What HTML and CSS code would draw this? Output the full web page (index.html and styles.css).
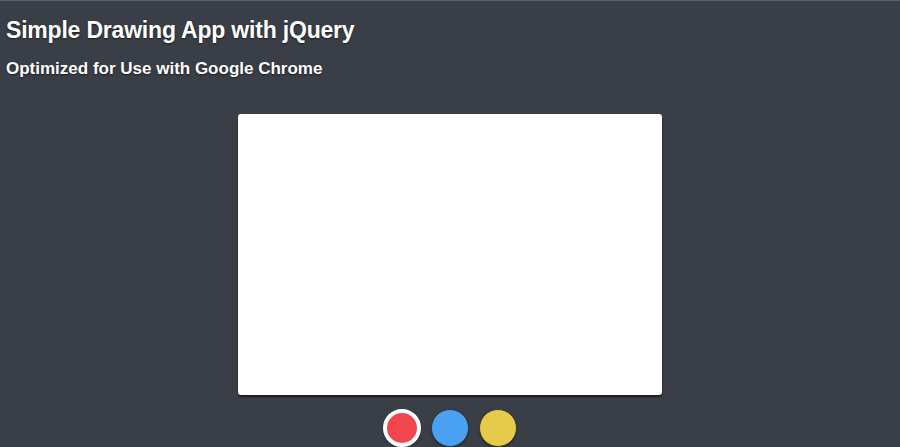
FILE: index.html
```html
<!DOCTYPE html>
<html>
<head>
<meta charset="utf-8">
<title>Simple Drawing App</title>
<link rel="stylesheet" href="styles.css">
</head>
<body>
<header class="header">
  <h1 class="title">Simple Drawing App with jQuery</h1>
  <h2 class="subtitle">Optimized for Use with Google Chrome</h2>
</header>
<main class="stage">
  <div class="canvas"></div>
  <ul class="colors">
    <li class="swatch red selected"></li>
    <li class="swatch blue"></li>
    <li class="swatch yellow"></li>
  </ul>
</main>
</body>
</html>
```

FILE: styles.css
```css
html, body {
  margin: 0;
  padding: 0;
  background: #3a3f47;
  height: 100%;
  overflow: hidden;
}
body {
  border-top: 1px solid #5c6066;
  font-family: "Liberation Sans", Arial, Helvetica, sans-serif;
  color: #fff;
}
.header {
  padding: 15px 6px 0;
}
.title {
  margin: 0;
  font-size: 23px;
  letter-spacing: -0.2px;
  line-height: 28px;
  font-weight: bold;
  text-shadow: 0 1px 2px rgba(0,0,0,0.55);
}
.subtitle {
  margin: 14px 0 0;
  font-size: 17px;
  line-height: 22px;
  font-weight: bold;
  text-shadow: 0 1px 2px rgba(0,0,0,0.55);
}
.stage {
  display: flex;
  flex-direction: column;
  align-items: center;
  padding-top: 34px;
}
.canvas {
  width: 424px;
  height: 281px;
  background: #fff;
  border-radius: 3px;
  box-shadow: 0 2px 2px rgba(0,0,0,0.6);
}
.colors {
  list-style: none;
  margin: 14px 0 0;
  padding: 0;
  display: flex;
  gap: 10px;
}
.swatch {
  width: 38px;
  height: 38px;
  box-sizing: border-box;
  border-radius: 50%;
  border: 4px solid transparent;
  box-shadow: 0 1px 2px rgba(0,0,0,0.4);
}
.swatch.selected {
  border-color: #fff;
}
.red { background: #f2464f; }
.blue { background: #4aa0f2; border: 1px solid #2f3a47; }
.yellow { background: #e6cb4a; border: 1px solid #3a3a33; }
```
